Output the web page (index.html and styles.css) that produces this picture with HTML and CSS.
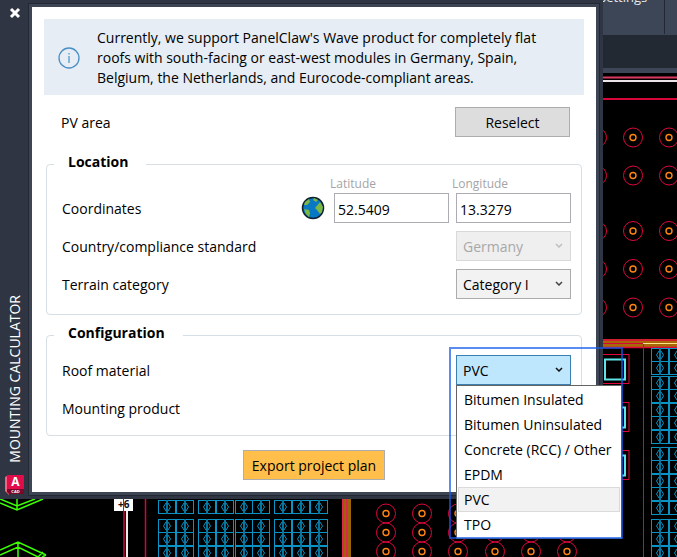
FILE: index.html
```html
<!DOCTYPE html>
<html lang="en">
<head>
<meta charset="utf-8">
<title>Mounting calculator</title>
<link rel="stylesheet" href="styles.css">
</head>
<body>
<svg class="drawing" viewBox="0 0 677 557" preserveAspectRatio="xMinYMin slice" aria-hidden="true">
  <defs>
    <g id="cell" fill="none" stroke="#0a94c6">
      <rect x=".5" y=".5" width="17" height="13"/>
      <path d="M9 0V14" stroke-width="2" stroke="#08749c"/>
      <path d="M8 3L5.500 7L8 11M10 3L12.500 7L10 11"/>
    </g>
    <g id="stack2"><use href="#cell"/><use href="#cell" y="13"/></g>
    <g id="stack5"><use href="#stack2"/><use href="#stack2" y="27"/><use href="#cell" y="54"/></g>
    <g id="pair5"><use href="#stack5"/><use href="#stack5" x="18"/></g>
    <g id="column"><use href="#cell"/><use href="#stack5" y="19"/></g>
    <g id="foot" fill="none">
      <circle r="9.500" stroke="#e0063c"/>
      <circle r="3" stroke="#ff8411" stroke-width="1.400"/>
    </g>
    <g id="feet"><use href="#foot"/><use href="#foot" x="36"/><use href="#foot" x="72"/></g>
    <g id="feet6"><use href="#feet"/><use href="#feet" x="109"/></g>
    <g id="hatch" fill="none"><path d="M0 0H26V29H0" stroke="#e0063c"/><rect x="2" y="5" width="20" height="20" stroke="#5fe3e6" stroke-width="2"/></g>
  </defs>
  <rect width="1400" height="1200" fill="#000"/>
  <rect x="600" width="800" height="35" fill="#3d4656"/>
  <rect x="600" y="35" width="800" height="33" fill="#222933"/>
  <rect x="600" y="68" width="800" height="5" fill="#3d4656"/>
  <path d="M664.500 0V34" stroke="#222933"/>
  <text class="ribbon-text" x="599" y="2">Settings</text>
  <path d="M603 77.500H1400" stroke="#d83a62" stroke-width="2"/>
  <path d="M603 81H1400" stroke="#ece4e8" stroke-width="2"/>
  <path d="M603 99H1400" stroke="#d5063a" stroke-width="2"/>
  <use href="#feet" x="597" y="137.500"/><use href="#feet" x="597" y="175.500"/>
  <use href="#feet" x="597" y="231"/><use href="#feet" x="597" y="269"/><use href="#feet" x="597" y="307.500"/>
  <rect x="603" y="339" width="800" height="8" fill="#a96808"/>
  <path d="M603 340H1400M603 347.500H1400" stroke="#e0063c" stroke-width="1.500"/>
  <path d="M603 343.500H643.500V1200" fill="none" stroke="#d5063a"/>
  <path d="M643 343.500H1400" stroke="#ffe28a"/>
  <use href="#hatch" x="603" y="354.500"/><use href="#hatch" x="603" y="402.500"/><use href="#hatch" x="603" y="450.500"/>
  <use href="#stack2" x="651" y="348"/><use href="#stack2" x="669" y="348"/>
  <use href="#pair5" x="651" y="376"/><use href="#pair5" x="651" y="447"/><use href="#pair5" x="651" y="519"/>
  <g fill="none" stroke="#3cff00" stroke-width="1.500">
    <path d="M0 499L17 506L35 499M0 503L17 510L43 499M17 499V510"/>
    <path d="M0 550L18 542L46 555M0 555L18 547L38 557M18 542V557M43 552L38 557M42 557L46 555"/>
  </g>
  <path d="M127 510V557" stroke="#eee" stroke-width="2"/>
  <path d="M124 499V557M145.500 499V557" stroke="#d5063a" stroke-width="1.500"/>
  <rect x="114" y="499" width="19" height="12" fill="#fff"/>
  <text class="tag-text" x="118" y="508">+6</text>
  <path d="M123.500 499V511" stroke="#e0063c"/>
  <use href="#column" x="158" y="500"/><use href="#column" x="176" y="500"/>
  <use href="#column" x="198" y="500"/><use href="#column" x="216" y="500"/><use href="#column" x="235" y="500"/><use href="#column" x="252" y="500"/>
  <use href="#column" x="274" y="500"/><use href="#column" x="292" y="500"/><use href="#column" x="310" y="500"/>
  <rect x="342" y="499" width="9" height="700" fill="#9a6508"/>
  <path d="M343 499V1200M347 499V1200" stroke="#e0284c" stroke-width="2"/>
  <use href="#feet6" x="386" y="513.500"/><use href="#feet6" x="386" y="532.500"/><use href="#feet6" x="386" y="551.500"/>
</svg>

<main class="palette">
  <aside class="rail">
    <button class="close" type="button" aria-label="Close">
      <svg viewBox="0 0 12 12" width="12" height="12"><path d="M2 2L10 10M10 2L2 10" stroke="#fff" stroke-width="3"/></svg>
    </button>
    <h1 class="rail-title">MOUNTING CALCULATOR</h1>
    <svg class="app-icon" viewBox="0 0 20 20" width="20" height="20" aria-hidden="true">
      <path d="M0 2L4 0V20L0 16Z" fill="#f0647f"/>
      <rect x="2" width="17" height="16" rx="1" fill="#e30c4b"/>
      <path d="M2 14H19V19H4L2 17Z" fill="#7d0729"/>
      <text class="app-letter" x="10.500" y="11" text-anchor="middle">A</text>
      <text class="app-text" x="10.500" y="18" text-anchor="middle">CAD</text>
    </svg>
  </aside>

  <form class="content">
    <section class="notice">
      <svg viewBox="0 0 22 22" width="22" height="22" aria-hidden="true">
        <circle cx="11" cy="11" r="10" fill="none" stroke="#4a8fc4" stroke-width="1.300"/>
        <path d="M11 9V16M11 6V7.500" stroke="#4a8fc4" stroke-width="1.200"/>
      </svg>
      <p>Currently, we support PanelClaw's Wave product for completely flat<br>roofs with south-facing or east-west modules in Germany, Spain,<br>Belgium, the Netherlands, and Eurocode-compliant areas.</p>
    </section>

    <div class="row area">
      <span>PV area</span>
      <button class="button" type="button">Reselect</button>
    </div>

    <fieldset class="group">
      <legend>Location</legend>
      <div class="row coordinates">
        <span class="row-label">Coordinates</span>
        <svg class="globe" viewBox="0 0 24 24" width="24" height="24" aria-hidden="true">
          <circle cx="12" cy="12" r="10.500" fill="#0877c4" stroke="#10202c" stroke-width="1.500"/>
          <path d="M4 6L8 3L9 6L6 9L3 9ZM13 2L17 4L15 6L12 4ZM19 6L22 11L21 16L19 18L16 14L14 12ZM3 13L8 14L9 17L8 21L5 18Z" fill="#7db743"/>
        </svg>
        <div class="field"><label for="lat">Latitude</label><input id="lat" type="text" value="52.5409"></div>
        <div class="field"><label for="lon">Longitude</label><input id="lon" type="text" value="13.3279"></div>
      </div>
      <div class="row">
        <label for="country">Country/compliance standard</label>
        <div class="select disabled">
          <select id="country" disabled><option>Germany</option></select>
          <svg viewBox="0 0 8 5" width="8" height="5"><path d="M1 1L4 4L7 1"/></svg>
        </div>
      </div>
      <div class="row">
        <label for="terrain">Terrain category</label>
        <div class="select">
          <select id="terrain"><option>Category I</option></select>
          <svg viewBox="0 0 8 5" width="8" height="5"><path d="M1 1L4 4L7 1"/></svg>
        </div>
      </div>
    </fieldset>

    <fieldset class="group config">
      <legend>Configuration</legend>
      <div class="row">
        <label for="roof">Roof material</label>
        <div class="select open">
          <select id="roof"><option>PVC</option></select>
          <svg viewBox="0 0 8 5" width="8" height="5"><path d="M1 1L4 4L7 1"/></svg>
          <div class="highlight"></div>
          <ul class="menu" role="listbox" aria-label="Roof material">
            <li role="option">Bitumen Insulated</li>
            <li role="option">Bitumen Uninsulated</li>
            <li role="option">Concrete (RCC) / Other</li>
            <li role="option">EPDM</li>
            <li role="option" class="current" aria-selected="true">PVC</li>
            <li role="option">TPO</li>
          </ul>
        </div>
      </div>
      <div class="row"><span>Mounting product</span></div>
    </fieldset>

    <button class="button export" type="button">Export project plan</button>
  </form>
</main>
</body>
</html>
```

FILE: styles.css
```css
* { box-sizing: border-box; }

body {
  margin: 0;
  min-height: 100vh;
  overflow: hidden;
  background: #000;
  color: #000;
  font: 14px/20px "Open Sans", "Noto Sans", sans-serif;
}

button, input, select { font: inherit; color: inherit; }

.drawing {
  position: absolute;
  inset: 0;
  width: 100%;
  height: 100%;
  z-index: -1;
}

.ribbon-text { font-size: 13px; fill: #e8eaee; }
.tag-text { font-size: 10px; font-weight: 700; fill: #111; }
.app-letter { font-size: 12px; font-weight: 700; fill: #fff; }
.app-text { font-size: 4px; font-weight: 700; fill: #fff; }

.palette {
  display: flex;
  margin-right: 74px;
  padding: 4px 4px 4px 0;
  background: #2f3542;
}

.rail {
  display: flex;
  flex-direction: column;
  align-items: center;
  width: 29px;
}

.close {
  display: flex;
  margin-top: 3px;
  padding: 0;
  border: 0;
  background: none;
}

.rail-title {
  margin: auto 0 12px;
  writing-mode: vertical-rl;
  transform: rotate(180deg);
  color: #fff;
  font-size: 14px;
  font-weight: 400;
  line-height: 22px;
}

.content {
  flex: 1;
  display: flex;
  flex-direction: column;
  padding: 12px;
  border: 3px solid #3d4554;
  outline: 1px solid #222834;
  background: #fff;
}

.notice {
  display: flex;
  align-items: center;
  gap: 17px;
  padding: 9px 14px 7px;
  background: #e6edf4;
}

.notice p { margin: 0; white-space: nowrap; }

.row {
  display: flex;
  align-items: center;
  justify-content: space-between;
  min-height: 30px;
}

.row > span, .row > label { padding-top: 2px; }

.area { margin: 12px 14px 0 17px; }

.button {
  width: 115px;
  height: 30px;
  padding: 2px 0 0;
  border: 1px solid #adadad;
  background: #ddd;
}

.group {
  display: flex;
  flex-direction: column;
  gap: 8px;
  min-width: 0;
  margin: 17px 2px 0;
  padding: 0 10px 15px 15px;
  border: 1px solid #d5dfe5;
  border-radius: 4px;
}

.group legend {
  margin-left: -8px;
  padding: 0 18px 4px 14px;
  font-weight: 700;
  line-height: 16px;
}

.config {
  margin-top: 10px;
  padding-top: 10px;
  padding-bottom: 12px;
}

.coordinates { align-items: flex-end; gap: 7px; }
.row-label { flex: 1; line-height: 28px; }
.globe { margin: 0 2px 3px 0; }

.field { display: flex; flex-direction: column; width: 115px; }

.field label {
  margin-left: -4px;
  padding-top: 1px;
  color: #a5a5a5;
  font-size: 12px;
  line-height: 18px;
}

.field input {
  width: 100%;
  height: 30px;
  padding: 2px 3px 0;
  border: 1px solid #abadb3;
  background: #fff;
}

.select { position: relative; width: 115px; }

.select select {
  display: block;
  width: 100%;
  height: 30px;
  padding: 2px 6px 0;
  appearance: none;
  border: 1px solid #acacac;
  border-radius: 0;
  background: #f2f2f2;
  opacity: 1;
}

.select svg {
  position: absolute;
  top: 12px;
  right: 8px;
  fill: none;
  stroke: #444;
  stroke-width: 1.5;
}

.disabled select { border-color: #d9d9d9; background: #efefef; color: #a8a8a8; }
.disabled svg { stroke: #bfbfbf; }
.open select { border-color: #3c7fb1; background: #bee6fd; }
.open svg { stroke: #111; }

.menu {
  position: absolute;
  top: 100%;
  left: 0;
  width: 166px;
  margin: 0;
  padding: 1px;
  border: 1px solid #646464;
  background: #fff;
  list-style: none;
  white-space: nowrap;
  z-index: 1;
}

.menu li {
  height: 25px;
  padding: 2px 5px;
  border: 1px solid transparent;
}

.menu .current { border-color: #dadada; background: #f2f2f2; }

.highlight {
  position: absolute;
  top: -8px;
  left: -7px;
  width: 174px;
  height: 192px;
  border: 2px solid rgb(20 90 235 / 70%);
  pointer-events: none;
  z-index: 2;
}

.export {
  align-self: center;
  width: 142px;
  margin-top: 14px;
  background: #ffbf4a;
}
```
